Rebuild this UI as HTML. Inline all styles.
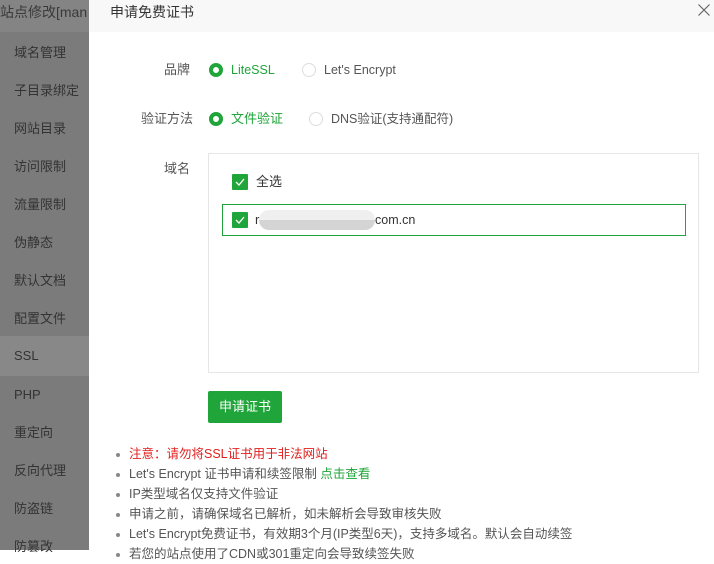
<!DOCTYPE html>
<html><head><meta charset="utf-8"><style>
*{margin:0;padding:0;box-sizing:border-box}
body{width:714px;height:550px;overflow:hidden;position:relative;font-family:"Liberation Sans","Noto Sans CJK SC",sans-serif;font-size:13px;line-height:20px;color:#555;background:#fff}
.side{position:absolute;left:0;top:0;width:89px;height:550px;background:#7b7b7b}
.side .t{height:32px;line-height:24px;font-size:14px;color:#3a3a3a;white-space:nowrap;overflow:hidden;background:#848484;width:89px}
.side .i{position:absolute;left:14px;font-size:13px;color:#333}
.side .act{position:absolute;left:0;top:336px;width:89px;height:40px;background:#888}
.modal{position:absolute;left:89px;top:0;width:625px;height:550px;background:#fff}
.hd{height:32px;background:#f8f8f8;line-height:24px;padding-left:21px;font-size:14px;color:#333}
.x{position:absolute;right:4px;top:4px;width:12px;height:12px}
.abs{position:absolute;height:20px;line-height:20px;white-space:nowrap}
.radio{position:absolute;width:14px;height:14px;border-radius:50%;border:1px solid #ddd;background:#fff}
.radio.on{border:4px solid #20a53a;background:#fff}
.cb{position:absolute;width:16px;height:16px;background:#20a53a;border-radius:1px}
.cb svg{position:absolute;left:3px;top:4px}
.g{color:#20a53a}
ul{position:absolute;top:444px;list-style:none}
li{position:relative;height:20px;line-height:20px;font-size:12.5px;color:#555;white-space:nowrap}
li:before{content:"";position:absolute;left:-13px;top:9px;width:4px;height:4px;border-radius:50%;background:#888}
</style></head><body>
<div class="side">
<div class="t">站点修改[man</div>
<div class="act"></div>
<div class="i" style="top:43px">域名管理</div>
<div class="i" style="top:81px">子目录绑定</div>
<div class="i" style="top:119px">网站目录</div>
<div class="i" style="top:157px">访问限制</div>
<div class="i" style="top:195px">流量限制</div>
<div class="i" style="top:233px">伪静态</div>
<div class="i" style="top:271px">默认文档</div>
<div class="i" style="top:309px">配置文件</div>
<div class="i" style="top:346px">SSL</div>
<div class="i" style="top:385px">PHP</div>
<div class="i" style="top:423px">重定向</div>
<div class="i" style="top:461px">反向代理</div>
<div class="i" style="top:499px">防盗链</div>
<div class="i" style="top:537px">防篡改</div>
</div>
<div class="modal">
<div class="hd">申请免费证书</div>
<svg class="x" viewBox="0 0 12 12"><path d="M0.5 0.5L11.5 11.5M11.5 0.5L0.5 11.5" stroke="#666" stroke-width="1.2"/></svg>
<div class="abs" style="left:75px;top:60px">品牌</div>
<div class="radio on" style="left:120px;top:63px"></div>
<div class="abs g" style="left:142px;top:60px;font-size:12.5px">LiteSSL</div>
<div class="radio" style="left:213px;top:63px"></div>
<div class="abs" style="left:235px;top:60px;font-size:12.5px">Let's Encrypt</div>
<div class="abs" style="left:52px;top:109px">验证方法</div>
<div class="radio on" style="left:120px;top:112px"></div>
<div class="abs g" style="left:142px;top:109px">文件验证</div>
<div class="radio" style="left:220px;top:112px"></div>
<div class="abs" style="left:242px;top:109px;font-size:12.5px">DNS验证(支持通配符)</div>
<div class="abs" style="left:75px;top:159px">域名</div>
<div class="abs" style="left:119px;top:153px;width:491px;height:220px;border:1px solid #e6e6e6"></div>
<div class="cb" style="left:143px;top:174px"><svg width="10" height="8"><path d="M1 4L4 7L9 1" stroke="#fff" stroke-width="1.3" fill="none"/></svg></div>
<div class="abs" style="left:167px;top:172px;color:#333">全选</div>
<div class="abs" style="left:133px;top:204px;width:464px;height:32px;border:1px solid #20a53a"></div>
<div class="cb" style="left:143px;top:212px"><svg width="10" height="8"><path d="M1 4L4 7L9 1" stroke="#fff" stroke-width="1.3" fill="none"/></svg></div>
<div class="abs" style="left:166px;top:210px;color:#333">r</div>
<div class="abs" style="left:170px;top:210px;width:116px;height:20px;border-radius:10px;background:linear-gradient(#efefef 50%,#d4d4d4 50%)"></div>
<div class="abs" style="left:286px;top:210px;color:#333;font-size:12.5px">com.cn</div>
<div class="abs" style="left:119px;top:391px;width:74px;height:32px;background:#20a53a;border-radius:2px;color:#fff;text-align:center;line-height:32px">申请证书</div>
<ul style="left:40px">
<li style="color:#e02020">注意：请勿将SSL证书用于非法网站</li>
<li>Let's Encrypt 证书申请和续签限制 <span class="g">点击查看</span></li>
<li>IP类型域名仅支持文件验证</li>
<li>申请之前，请确保域名已解析，如未解析会导致审核失败</li>
<li>Let's Encrypt免费证书，有效期3个月(IP类型6天)，支持多域名。默认会自动续签</li>
<li>若您的站点使用了CDN或301重定向会导致续签失败</li>
</ul>
</div>
</body></html>
